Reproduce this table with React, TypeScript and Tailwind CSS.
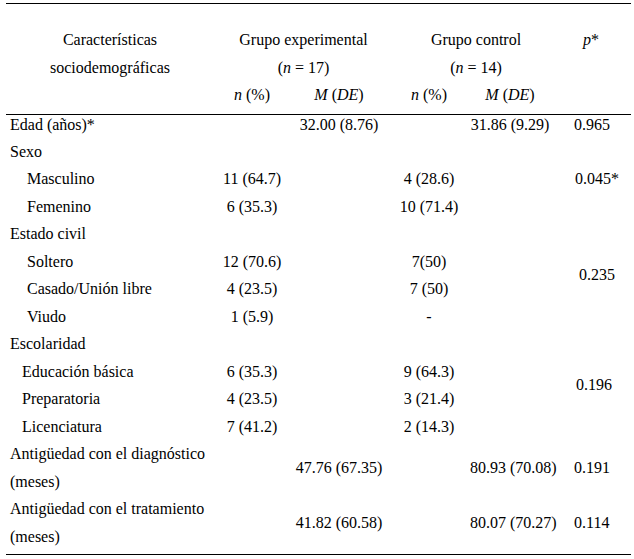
import React from "react";

type Row = {
  label: React.ReactNode;
  indent?: string;
  expN?: string;
  expM?: string;
  ctrlN?: string;
  ctrlM?: string;
  p?: string;
  pClass?: string;
  pSpan?: number;
  noP?: boolean;
};

const rows: Row[] = [
  { label: "Edad (años)*", expM: "32.00 (8.76)", ctrlM: "31.86 (9.29)", p: "0.965" },
  { label: "Sexo" },
  { label: "Masculino", indent: "pl-[21px]", expN: "11 (64.7)", ctrlN: "4 (28.6)", p: "0.045*", pClass: "pl-[25px]" },
  { label: "Femenino", indent: "pl-[21px]", expN: "6 (35.3)", ctrlN: "10 (71.4)" },
  { label: "Estado civil", p: "0.235", pClass: "pl-[29px]", pSpan: 4 },
  { label: "Soltero", indent: "pl-[21px]", expN: "12 (70.6)", ctrlN: "7(50)", noP: true },
  { label: "Casado/Unión libre", indent: "pl-[21px]", expN: "4 (23.5)", ctrlN: "7 (50)", noP: true },
  { label: "Viudo", indent: "pl-[21px]", expN: "1 (5.9)", ctrlN: "-", noP: true },
  { label: "Escolaridad", p: "0.196", pClass: "pl-[26px]", pSpan: 4 },
  { label: "Educación básica", indent: "pl-[16px]", expN: "6 (35.3)", ctrlN: "9 (64.3)", noP: true },
  { label: "Preparatoria", indent: "pl-[16px]", expN: "4 (23.5)", ctrlN: "3 (21.4)", noP: true },
  { label: "Licenciatura", indent: "pl-[16px]", expN: "7 (41.2)", ctrlN: "2 (14.3)", noP: true },
  {
    label: (
      <>
        Antigüedad con el diagnóstico
        <br />
        (meses)
      </>
    ),
    expM: "47.76 (67.35)",
    ctrlM: "80.93 (70.08)",
    p: "0.191",
  },
  {
    label: (
      <>
        Antigüedad con el tratamiento
        <br />
        (meses)
      </>
    ),
    expM: "41.82 (60.58)",
    ctrlM: "80.07 (70.27)",
    p: "0.114",
  },
];

const NPct = () => (
  <>
    <i>n</i> (%)
  </>
);

const MDe = () => (
  <>
    <i>M</i> (<i>DE</i>)
  </>
);

const App = () => {
  return (
    <div className="min-h-[559px] w-[634px] bg-white pl-[6px] pt-[3px] text-black [font-family:'Liberation_Serif',serif] text-[16px]">
      <table className="w-[625px] table-fixed border-collapse">
        <colgroup>
          <col className="w-[208px]" />
          <col className="w-[76px]" />
          <col className="w-[98px]" />
          <col className="w-[82px]" />
          <col className="w-[80px]" />
          <col className="w-[81px]" />
        </colgroup>
        <thead className="border-y border-black leading-[27.5px]">
          <tr>
            <th rowSpan={3} className="p-0 pt-[22px] text-center align-top font-normal">
              Características
              <br />
              sociodemográficas
            </th>
            <th colSpan={2} className="p-0 pt-[22px] pl-[5px] text-center font-normal">
              Grupo experimental
            </th>
            <th colSpan={2} className="p-0 pt-[22px] pl-[14px] text-center font-normal">
              Grupo control
            </th>
            <th rowSpan={3} className="p-0 pt-[22px] pl-[33px] text-left align-top font-normal">
              <i>p</i>*
            </th>
          </tr>
          <tr>
            <th colSpan={2} className="p-0 pl-[5px] text-center font-normal">
              (<i>n</i> = 17)
            </th>
            <th colSpan={2} className="p-0 pl-[14px] text-center font-normal">
              (<i>n</i> = 14)
            </th>
          </tr>
          <tr>
            <th className="p-0 pb-[5px] text-center font-normal"><NPct /></th>
            <th className="p-0 pb-[5px] text-center font-normal"><MDe /></th>
            <th className="p-0 pb-[5px] text-center font-normal"><NPct /></th>
            <th className="p-0 pb-[5px] text-center font-normal"><MDe /></th>
          </tr>
        </thead>
        <tbody className="border-b border-black leading-[27.5px]">
          {rows.map((row, i) => {
            const first = i === 0;
            const last = i === rows.length - 1;
            const cell = `p-0 text-center whitespace-nowrap ${first ? "leading-[19px] pb-[4px]" : ""} ${last ? "pb-[4px]" : ""}`;
            return (
              <tr key={i}>
                <td className={`${cell} !text-left ${row.indent ?? "pl-[4px]"}`}>{row.label}</td>
                <td className={cell}>{row.expN}</td>
                <td className={cell}>{row.expM}</td>
                <td className={cell}>{row.ctrlN}</td>
                <td className={cell}>{row.ctrlM}</td>
                {!row.noP && (
                  <td rowSpan={row.pSpan ?? 1} className={`${cell} !text-left align-middle ${row.pClass ?? "pl-[24px]"}`}>
                    {row.p}
                  </td>
                )}
              </tr>
            );
          })}
        </tbody>
      </table>
    </div>
  );
};

export default App;
